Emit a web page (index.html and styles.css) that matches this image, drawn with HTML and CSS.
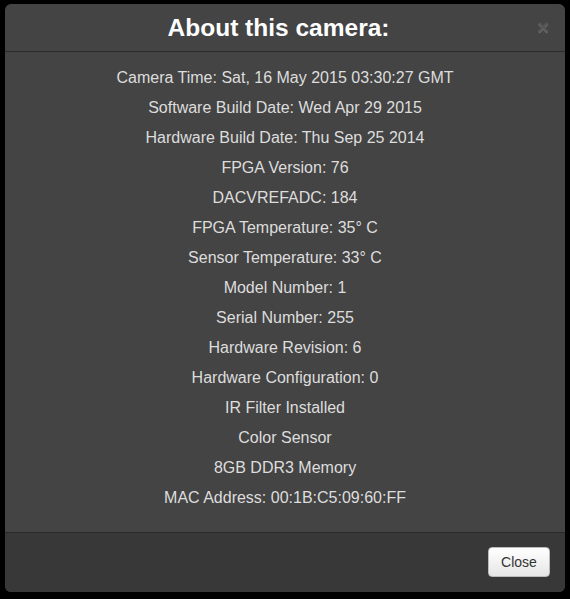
FILE: index.html
```html
<!DOCTYPE html>
<html lang="en">
<head>
    <meta charset="UTF-8">
    <meta name="viewport" content="width=device-width, initial-scale=1.0">
    <title>About this camera</title>
    <link rel="stylesheet" href="styles.css">
</head>
<body>
    <div class="modal">
        <div class="modal-header">
            <h3>About this camera:</h3>
            <button class="close-x" type="button">&times;</button>
        </div>
        <div class="modal-body">
            <p>Camera Time: Sat, 16 May 2015 03:30:27 GMT</p>
            <p>Software Build Date: Wed Apr 29 2015</p>
            <p>Hardware Build Date: Thu Sep 25 2014</p>
            <p>FPGA Version: 76</p>
            <p>DACVREFADC: 184</p>
            <p>FPGA Temperature: 35&deg; C</p>
            <p>Sensor Temperature: 33&deg; C</p>
            <p>Model Number: 1</p>
            <p>Serial Number: 255</p>
            <p>Hardware Revision: 6</p>
            <p>Hardware Configuration: 0</p>
            <p>IR Filter Installed</p>
            <p>Color Sensor</p>
            <p>8GB DDR3 Memory</p>
            <p>MAC Address: 00:1B:C5:09:60:FF</p>
        </div>
        <div class="modal-footer">
            <button class="btn" type="button">Close</button>
        </div>
    </div>
</body>
</html>
```

FILE: styles.css
```css
* {
    box-sizing: border-box;
}
body {
    margin: 0;
    padding: 4px 5px 0 5px;
    background: #000;
    font-family: "Liberation Sans", Arial, sans-serif;
    height: 599px;
}
.modal {
    width: 560px;
    height: 588px;
    background: #444;
    border-radius: 6px;
    overflow: hidden;
    display: flex;
    flex-direction: column;
}
.modal-header {
    position: relative;
    height: 48px;
    border-bottom: 1px solid #2a2a2a;
    text-align: center;
}
.modal-header h3 {
    margin: 0;
    padding-right: 13px;
    line-height: 47px;
    font-size: 24.5px;
    font-weight: bold;
    color: #fff;
}
.close-x {
    position: absolute;
    top: 13px;
    right: 16px;
    padding: 0;
    border: none;
    background: none;
    font-family: "Liberation Sans", Arial, sans-serif;
    font-size: 20px;
    font-weight: bold;
    line-height: 20px;
    color: #555;
    text-shadow: 0 1px 0 #777;
}
.modal-body {
    flex: 1;
    padding: 11px 15px 0 15px;
    text-align: center;
}
.modal-body p {
    margin: 0;
    line-height: 30px;
    font-size: 16px;
    color: #ddd;
}
.modal-footer {
    height: 60px;
    background: #383838;
    border-top: 1px solid #2a2a2a;
    padding: 14px 15px 0 0;
    display: flex;
    justify-content: flex-end;
    align-items: flex-start;
}
.btn {
    width: 62px;
    height: 30px;
    padding: 0;
    font-family: "Liberation Sans", Arial, sans-serif;
    font-size: 14px;
    color: #333;
    background: linear-gradient(#fff, #e6e6e6);
    border: 1px solid #bbb;
    border-radius: 4px;
    box-shadow: inset 0 1px 0 rgba(255, 255, 255, 0.2);
}
```
